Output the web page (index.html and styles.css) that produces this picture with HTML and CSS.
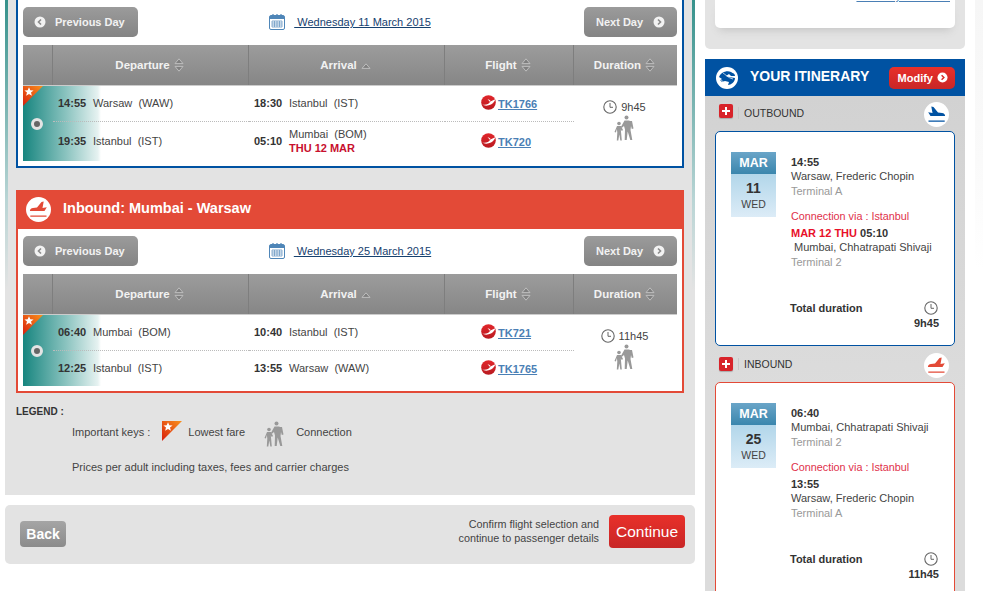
FILE: index.html
```html
<!DOCTYPE html>
<html lang="en">
<head>
  <meta charset="UTF-8">
  <title>Flight selection</title>
  <link rel="stylesheet" href="styles.css">
</head>
<body>
  <svg class="sprite" width="0" height="0">
    <symbol id="i-prev" viewBox="0 0 12 12"><circle cx="6" cy="6" r="5.5" fill="#f2f2f2"/><path d="M7 3.5 4.5 6 7 8.5" fill="none" stroke="#8a8a8a" stroke-width="1.6"/></symbol>
    <symbol id="i-next" viewBox="0 0 12 12"><circle cx="6" cy="6" r="5.5" fill="#f2f2f2"/><path d="M5 3.5 7.5 6 5 8.5" fill="none" stroke="#8a8a8a" stroke-width="1.6"/></symbol>
    <symbol id="i-cal" viewBox="0 0 16 16"><rect x=".5" y="1.5" width="15" height="14" rx="1.5" fill="#fff" stroke="#4f86b8"/><rect x="1" y="2" width="14" height="3" fill="#4f86b8"/><path d="M4 0v3M8 0v3M12 0v3" stroke="#4f86b8" stroke-width="1.2"/><path d="M3 7h10v6H3zM3 9h10M3 11h10M5.5 7v6M8 7v6M10.5 7v6" fill="none" stroke="#6d9ac4" stroke-width=".8"/></symbol>
    <symbol id="i-sort" viewBox="0 0 10 14"><path d="M5 .8 9 5.6H1zM5 13.2 1 8.400h8z" fill="#7f7f7f" stroke="#bdbdbd"/></symbol>
    <symbol id="i-up" viewBox="0 0 10 6"><path d="M5 .8 9 5.400H1z" fill="#7f7f7f" stroke="#bdbdbd"/></symbol>
    <symbol id="i-tk" viewBox="0 0 15 15"><defs><linearGradient id="g-tk" x1="0" y1="0" x2="0" y2="1"><stop offset="0" stop-color="#e2262b"/><stop offset="1" stop-color="#b81a20"/></linearGradient></defs><circle cx="7.500" cy="7.500" r="7.300" fill="url(#g-tk)"/><path d="M1 9.600C5 10.400 7.800 9.200 9.300 6.600L14.300 4.200C13.500 6.500 12.300 8.300 10 9.500 7 11 3.500 11 1 9.600Z" fill="#fff"/><path d="M6.500 4.400C7.600 4.300 8.700 4.800 9.500 5.800L8.700 6.800C8.300 5.800 7.500 4.900 6.500 4.400Z" fill="#fff"/></symbol>
    <symbol id="i-clock" viewBox="0 0 14 14"><circle cx="7" cy="7" r="6.200" fill="none" stroke="#666" stroke-width="1.100"/><path d="M7 3v4.300h3" fill="none" stroke="#666" stroke-width="1"/></symbol>
    <symbol id="i-people" viewBox="0 0 20 26">
      <circle cx="12.500" cy="2.500" r="2"/><path d="M10.500 5.500h4.500l1 .5h2l1.500 7.500-1.700.5-.8-3-.5 4 1.800 10h-2l-2.600-8.500-1 8.500h-2l.3-10.500-1-3.500-2.300 2-.8-1z"/>
      <circle cx="5" cy="8.500" r="1.800"/><path d="M3 11h4l2 4-1.200 1-1-1.500.4 4 .6 7H6.300l-1-6-1 6H2.800l.5-8-.4-3.500-1 3.500-1.400-.5z"/>
    </symbol>
    <symbol id="i-plane" viewBox="0 0 25 25"><circle cx="12.500" cy="12.500" r="12.500" fill="#fff"/><path d="M4.200 10.300 8.500 11 7.300 4.600l2.200.5 4.500 5.500 4 .5c2 .3 3 1.300 3.100 2.900H6.500zM4.500 18.600h16.200v1.200H4.500z" fill="currentColor"/></symbol>
    <symbol id="i-corner" viewBox="0 0 20 20"><defs><linearGradient id="g-corner" x1="0" y1="1" x2="1" y2="0"><stop offset="0" stop-color="#d81e0e"/><stop offset="1" stop-color="#f9921c"/></linearGradient></defs><path d="M0 0h20L0 20z" fill="url(#g-corner)"/><path d="M6 1.200 7.300 4.300l3.300.2-2.600 2.100.9 3.200L6 8l-2.900 1.800.9-3.200-2.600-2.100 3.300-.2z" fill="#fff"/></symbol>
  </svg>

  <div class="page">
    <main class="main">
      <div class="panel">
        <section class="card card-blue">
          <div class="day-nav">
            <a class="day-btn"><svg class="arrow"><use href="#i-prev"/></svg>Previous Day</a>
            <div class="day-date"><svg class="cal"><use href="#i-cal"/></svg><a>&nbsp;Wednesday 11 March 2015</a></div>
            <a class="day-btn day-next">Next Day<svg class="arrow"><use href="#i-next"/></svg></a>
          </div>
          <div class="thead">
            <div></div>
            <div>Departure<svg class="sort"><use href="#i-sort"/></svg></div>
            <div>Arrival<svg class="sort-up"><use href="#i-up"/></svg></div>
            <div>Flight<svg class="sort"><use href="#i-sort"/></svg></div>
            <div>Duration<svg class="sort"><use href="#i-sort"/></svg></div>
          </div>
          <div class="flights">
            <svg class="corner"><use href="#i-corner"/></svg>
            <div class="pick"><span class="radio"></span></div>
            <div class="cell first"><b>14:55</b><span>Warsaw&nbsp; (WAW)</span></div>
            <div class="cell first arr"><b>18:30</b><span>Istanbul&nbsp; (IST)</span></div>
            <div class="cell first fl"><svg class="tk"><use href="#i-tk"/></svg><a>TK1766</a></div>
            <div class="dur"><div class="dur-top"><svg class="clock"><use href="#i-clock"/></svg>9h45</div><svg class="people"><use href="#i-people"/></svg></div>
            <div class="cell tall"><b>19:35</b><span>Istanbul&nbsp; (IST)</span></div>
            <div class="cell tall arr"><b>05:10</b><span>Mumbai&nbsp; (BOM)<em>THU 12 MAR</em></span></div>
            <div class="cell tall fl"><svg class="tk"><use href="#i-tk"/></svg><a>TK720</a></div>
          </div>
        </section>

        <section class="card card-red">
          <h2 class="card-title"><svg class="title-icon flip"><use href="#i-plane"/></svg><span>Inbound: Mumbai - Warsaw</span></h2>
          <div class="day-nav">
            <a class="day-btn"><svg class="arrow"><use href="#i-prev"/></svg>Previous Day</a>
            <div class="day-date"><svg class="cal"><use href="#i-cal"/></svg><a>&nbsp;Wednesday 25 March 2015</a></div>
            <a class="day-btn day-next">Next Day<svg class="arrow"><use href="#i-next"/></svg></a>
          </div>
          <div class="thead">
            <div></div>
            <div>Departure<svg class="sort"><use href="#i-sort"/></svg></div>
            <div>Arrival<svg class="sort-up"><use href="#i-up"/></svg></div>
            <div>Flight<svg class="sort"><use href="#i-sort"/></svg></div>
            <div>Duration<svg class="sort"><use href="#i-sort"/></svg></div>
          </div>
          <div class="flights">
            <svg class="corner"><use href="#i-corner"/></svg>
            <div class="pick"><span class="radio"></span></div>
            <div class="cell first"><b>06:40</b><span>Mumbai&nbsp; (BOM)</span></div>
            <div class="cell first arr"><b>10:40</b><span>Istanbul&nbsp; (IST)</span></div>
            <div class="cell first fl"><svg class="tk"><use href="#i-tk"/></svg><a>TK721</a></div>
            <div class="dur"><div class="dur-top"><svg class="clock"><use href="#i-clock"/></svg>11h45</div><svg class="people"><use href="#i-people"/></svg></div>
            <div class="cell short"><b>12:25</b><span>Istanbul&nbsp; (IST)</span></div>
            <div class="cell short arr"><b>13:55</b><span>Warsaw&nbsp; (WAW)</span></div>
            <div class="cell short fl"><svg class="tk"><use href="#i-tk"/></svg><a>TK1765</a></div>
          </div>
        </section>

        <div class="legend">
          <div class="legend-title">LEGEND :</div>
          <div class="legend-keys">
            <span>Important keys :</span>
            <svg class="key-corner"><use href="#i-corner"/></svg>
            <span>Lowest fare</span>
            <svg class="key-people"><use href="#i-people"/></svg>
            <span>Connection</span>
          </div>
          <p class="legend-note">Prices per adult including taxes, fees and carrier charges</p>
        </div>
      </div>

      <div class="actions">
        <a class="back-btn">Back</a>
        <p class="confirm">Confirm flight selection and<br>continue to passenger details</p>
        <a class="continue-btn">Continue</a>
      </div>
    </main>

    <aside class="side">
      <div class="tools"><div class="tools-card"><a>Currency converter</a></div></div>
      <div class="itin-head">
        <svg class="globe" viewBox="0 0 22 22"><circle cx="11" cy="11" r="11" fill="#fff"/><path d="M3 10c2-5 8-7 12-5 1 1 4 1 4 4l-4 0-2-2-3 2 3 1 6 1c0 4-4 7-7 7l1-3-4-1-3 1-2-2 2-1-3-2z" fill="#0052a2"/><path d="M3 12c3 1 5 3 6 6M7 6c2 1 5 5 10 6" fill="none" stroke="#fff" stroke-width=".7"/></svg>
        <span class="itin-title">YOUR ITINERARY</span>
        <a class="modify">Modify<svg class="modify-arrow" viewBox="0 0 12 12"><circle cx="6" cy="6" r="5.500" fill="#fff"/><path d="M5 3.500 7.500 6 5 8.500" fill="none" stroke="#d92a26" stroke-width="1.600"/></svg></a>
      </div>
      <div class="itin-body">
        <div class="leg-row">
          <span class="plus"></span><span class="leg-name">OUTBOUND</span>
          <svg class="leg-icon blue"><use href="#i-plane"/></svg>
        </div>
        <div class="leg leg-blue">
          <div class="leg-main">
            <div class="tile"><div class="tile-mon">MAR</div><div class="tile-day">11</div><div class="tile-wd">WED</div></div>
            <div class="stops">
              <b>14:55</b>
              <div>Warsaw, Frederic Chopin</div>
              <div class="term">Terminal A</div>
              <div class="via">Connection via : Istanbul</div>
              <b><em>MAR 12 THU</em> 05:10</b>
              <div>&nbsp;Mumbai, Chhatrapati Shivaji</div>
              <div class="term">Terminal 2</div>
            </div>
          </div>
          <div class="total"><b>Total duration</b><div class="total-time"><svg class="clock"><use href="#i-clock"/></svg><b>9h45</b></div></div>
        </div>
        <div class="leg-row leg-row-in">
          <span class="plus"></span><span class="leg-name">INBOUND</span>
          <svg class="leg-icon red flip"><use href="#i-plane"/></svg>
        </div>
        <div class="leg leg-red">
          <div class="leg-main">
            <div class="tile"><div class="tile-mon">MAR</div><div class="tile-day">25</div><div class="tile-wd">WED</div></div>
            <div class="stops">
              <b>06:40</b>
              <div>Mumbai, Chhatrapati Shivaji</div>
              <div class="term">Terminal 2</div>
              <div class="via">Connection via : Istanbul</div>
              <b>13:55</b>
              <div>Warsaw, Frederic Chopin</div>
              <div class="term">Terminal A</div>
            </div>
          </div>
          <div class="total"><b>Total duration</b><div class="total-time"><svg class="clock"><use href="#i-clock"/></svg><b>11h45</b></div></div>
        </div>
      </div>
    </aside>
    <div class="edge"></div>
  </div>
</body>
</html>
```

FILE: styles.css
```css
* {
  box-sizing: border-box;
}
html, body {
  height: 591px;
  overflow: hidden;
}
body {
  margin: 0;
  background: #fff;
  color: #444;
  font-family: "Liberation Sans", Arial, sans-serif;
  font-size: 11px;
}
a {
  cursor: pointer;
}
em {
  font-style: normal;
}
svg {
  display: block;
  flex: none;
}
.sprite {
  position: absolute;
}
.flip {
  transform: scaleX(-1);
}
.page {
  display: flex;
  padding-left: 5px;
}
.main {
  width: 690px;
  flex: none;
}
.panel {
  height: 495px;
  padding: 0 8px;
  background: #e3e3e3;
  border-style: solid;
  border-width: 0 3px;
  border-image: linear-gradient(#35918b, #b9d5d5 200px, #e3e3e3 290px) 1;
}
.card {
  background: #fff;
  padding: 0 5px 5px;
}
.card-blue {
  height: 168px;
  padding-top: 7px;
  border: solid #0052a2;
  border-width: 0 2px 2px;
}
.card-red {
  height: 203px;
  margin-top: 22px;
  border: 2px solid #e34a37;
  border-top: 0;
}
.card-title {
  display: flex;
  align-items: center;
  gap: 12px;
  height: 39px;
  margin: 0 -5px 7px;
  padding-left: 8px;
  background: #e34a37;
  color: #fff;
  font-size: 14.5px;
}
.card-title span {
  margin-top: -3px;
}
.title-icon {
  width: 25px;
  height: 25px;
  color: #e34a37;
}
.day-nav {
  display: flex;
  align-items: center;
  height: 30px;
}
.day-btn {
  display: flex;
  align-items: center;
  gap: 9px;
  width: 115px;
  height: 30px;
  padding-left: 11px;
  border-radius: 5px;
  background: linear-gradient(#9b9b9b, #848484);
  color: #f2f2f2;
  font-weight: bold;
}
.day-next {
  width: 93px;
  padding-left: 12px;
  gap: 10px;
}
.arrow {
  width: 12px;
  height: 12px;
}
.day-date {
  flex: 1;
  display: flex;
  align-items: center;
  justify-content: center;
  gap: 9px;
  padding-right: 22px;
}
.day-date a {
  color: #16416f;
  text-decoration: underline;
}
.cal {
  width: 16px;
  height: 16px;
}
.thead, .flights {
  display: grid;
  grid-template-columns: 30px 196px 196px 129px 103px;
}
.thead {
  height: 41px;
  margin-top: 8px;
  border-bottom: 1px solid #ccc;
  background: linear-gradient(#9c9c9c, #868686);
  color: #f2f2f2;
  font-size: 11.500px;
  font-weight: bold;
}
.thead > div {
  display: flex;
  align-items: center;
  justify-content: center;
  gap: 4px;
  padding-right: 2px;
  border-right: 1px solid #7e7e7e;
}
.thead > div:last-child {
  border-right: 0;
}
.sort {
  width: 10px;
  height: 14px;
}
.sort-up {
  width: 10px;
  height: 6px;
  margin-top: 2px;
}
.flights {
  position: relative;
  grid-template-rows: auto auto;
  background: linear-gradient(90deg, #17857f, #8ac3bf 55%, #e6f2f1 96%, #fff) no-repeat;
  background-size: 78px 100%;
}
.corner {
  position: absolute;
  left: 0;
  top: 0;
  width: 20px;
  height: 20px;
}
.pick {
  grid-row: 1 / 3;
  display: flex;
  align-items: center;
  justify-content: center;
  padding-right: 2px;
}
.radio {
  width: 12px;
  height: 12px;
  border-radius: 50%;
  border: 3px solid #e4e4e4;
  background: #666;
}
.cell {
  display: flex;
  align-items: center;
  padding: 0 0 2px 5px;
}
.cell.first {
  height: 36px;
  border-bottom: 1px dotted #bbb;
}
.cell.tall {
  height: 39px;
}
.cell.short {
  height: 35px;
}
.cell b {
  width: 35px;
  color: #333;
  flex: none;
}
.cell em {
  display: block;
  margin-top: 2px;
  color: #c8102e;
  font-weight: bold;
}
.cell.fl {
  padding-left: 36px;
}
.fl a {
  margin: 3px 0 0 2px;
  color: #4a7fb5;
  font-weight: bold;
  text-decoration: underline;
}
.tk {
  width: 15px;
  height: 15px;
  margin-top: -1px;
}
.dur {
  grid-column: 5;
  grid-row: 1 / 3;
  display: flex;
  flex-direction: column;
  align-items: center;
  padding: 14px 2px 0 0;
}
.dur-top {
  display: flex;
  align-items: center;
  gap: 4px;
  color: #444;
}
.clock {
  width: 14px;
  height: 14px;
}
.people {
  width: 20px;
  height: 26px;
  margin: 1px 0 0 -1px;
  fill: #999;
}
.legend {
  padding-top: 12px;
}
.legend-title {
  color: #333;
  font-weight: bold;
  font-size: 10px;
  line-height: 13px;
}
.legend-keys {
  display: flex;
  align-items: center;
  height: 22px;
  margin-top: 3px;
  padding-left: 56px;
}
.key-corner {
  width: 20px;
  height: 20px;
  margin: 0 6px 2px 12px;
}
.key-people {
  width: 20px;
  height: 26px;
  margin: 4px 12px 0 19px;
  fill: #999;
}
.legend-note {
  margin: 17px 0 0;
  padding-left: 56px;
  line-height: 14px;
}
.actions {
  display: flex;
  align-items: center;
  height: 59px;
  margin-top: 10px;
  padding: 0 10px 0 15px;
  border-radius: 5px;
  background: #e3e3e3;
}
.back-btn {
  width: 46px;
  margin-top: -2px;
  padding: 5px 0;
  border-radius: 4px;
  background: linear-gradient(#a5a5a5, #8b8b8b);
  color: #fff;
  font-size: 14px;
  font-weight: bold;
  line-height: 16px;
  text-align: center;
}
.confirm {
  margin: 0 10px 8px auto;
  font-size: 10.800px;
  text-align: right;
  line-height: 14px;
}
.continue-btn {
  width: 76px;
  height: 33px;
  margin-top: -6px;
  border-radius: 4px;
  background: linear-gradient(#e8302a, #c82626);
  color: #fff;
  font-size: 15.500px;
  line-height: 33px;
  text-align: center;
}
.side {
  width: 260px;
  margin-left: 10px;
  flex: none;
}
.tools {
  height: 49px;
  padding: 0 10px;
  background: #e3e3e3;
  border-radius: 0 0 5px 5px;
}
.tools-card {
  height: 28px;
  overflow: hidden;
  padding-right: 5px;
  background: #fff;
  border-radius: 0 0 5px 5px;
  box-shadow: 0 6px 8px -4px #c4c4c4;
  text-align: right;
}
.tools-card a {
  display: block;
  margin-top: -10px;
  line-height: 13px;
  color: #4a7fb5;
  text-decoration: underline;
}
.itin-head {
  display: flex;
  align-items: center;
  height: 37px;
  margin-top: 10px;
  padding: 0 10px 0 11px;
  background: #0052a2;
}
.globe {
  width: 22px;
  height: 22px;
  margin-right: 12px;
}
.itin-title {
  margin-bottom: 3px;
  color: #fff;
  font-size: 14px;
  font-weight: bold;
}
.modify {
  display: flex;
  align-items: center;
  gap: 4px;
  height: 22px;
  margin-left: auto;
  padding: 0 7px 0 9px;
  border-radius: 5px;
  background: linear-gradient(#e8302a, #c82626);
  color: #fff;
  font-weight: bold;
}
.modify-arrow {
  width: 11px;
  height: 11px;
}
.itin-body {
  height: 495px;
  padding: 0 10px;
  background: linear-gradient(#d2d2d2, #dcdcdc 300px);
}
.leg-row {
  display: flex;
  align-items: center;
  height: 35px;
  padding: 0 6px 0 4px;
}
.leg-row-in {
  height: 36px;
}
.leg-row .leg-icon {
  margin-top: 2px;
}
.plus {
  position: relative;
  width: 14px;
  height: 14px;
  margin-bottom: 5px;
  border-radius: 2px;
  background: #d8232a;
  box-shadow: 0 1px 1px #aaa;
}
.leg-row-in .plus {
  margin-bottom: 0;
}
.plus::before, .plus::after {
  content: "";
  position: absolute;
  background: #fff;
}
.plus::before {
  left: 3px;
  top: 6px;
  width: 8px;
  height: 2px;
}
.plus::after {
  left: 6px;
  top: 3px;
  width: 2px;
  height: 8px;
}
.leg-name {
  margin: 0 0 2px 5px;
  padding-left: 5px;
  border-left: 1px solid #c8c8c8;
  color: #333;
  font-size: 10.500px;
  line-height: 12px;
}
.leg-row-in .leg-name {
  margin-bottom: 0;
}
.leg-icon {
  width: 25px;
  height: 25px;
  margin-left: auto;
}
.leg-icon.blue {
  color: #0052a2;
}
.leg-icon.red {
  color: #e34a37;
}
.leg {
  height: 215px;
  padding: 20px 15px 0;
  background: #fff;
  border-radius: 5px;
}
.leg-blue {
  border: 1px solid #0052a2;
}
.leg-red {
  border: 1px solid #e34a37;
}
.leg-main {
  display: flex;
  gap: 15px;
  height: 146px;
}
.tile {
  width: 45px;
  height: 65px;
  background: linear-gradient(#9ccbe3, #dcecf7);
  text-align: center;
}
.tile-mon {
  height: 22px;
  background: linear-gradient(#6aa5c8, #3a86ad);
  color: #fff;
  font-size: 12.500px;
  font-weight: bold;
  line-height: 22px;
}
.tile-day {
  margin-top: 7px;
  color: #333;
  font-size: 14px;
  font-weight: bold;
  line-height: 15px;
}
.tile-wd {
  margin-top: 1px;
  color: #444;
  font-size: 10.500px;
  line-height: 15px;
}
.stops {
  padding-top: 3px;
  line-height: 14.500px;
}
.stops b {
  display: block;
  color: #333;
  line-height: 14px;
}
.stops b em {
  color: #e8102a;
}
.term {
  color: #999;
  margin-top: .5px;
}
.via {
  margin: 10px 0 3px;
  color: #e0304a;
  font-size: 10.800px;
}
.total {
  display: flex;
  justify-content: space-between;
  padding-left: 59px;
  color: #333;
}
.total > b {
  padding-top: 3px;
  line-height: 14px;
}
.total-time {
  display: flex;
  flex-direction: column;
  align-items: flex-end;
  padding-top: 3px;
}
.total-time .clock {
  margin: 0 1px 2px 0;
}
.edge {
  width: 8px;
  height: 270px;
  margin-left: 10px;
  background: linear-gradient(#f6f6f6, #fafafa 60%, #fff);
}
```
